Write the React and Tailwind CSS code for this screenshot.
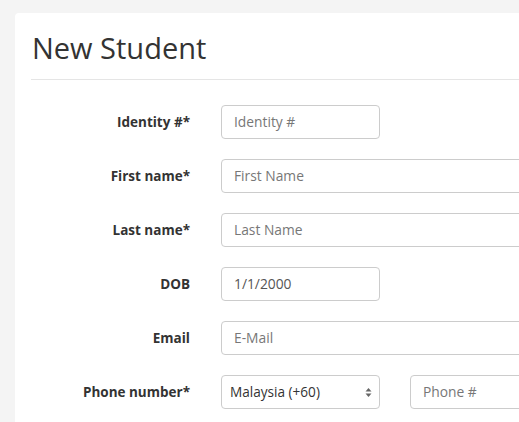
export default function App() {
  const rows = [
    { label: "Identity #*", placeholder: "Identity #", w: "w-[159px]" },
    { label: "First name*", placeholder: "First Name", w: "flex-1" },
    { label: "Last name*", placeholder: "Last Name", w: "flex-1" },
    { label: "DOB", value: "1/1/2000", w: "w-[159px]" },
    { label: "Email", placeholder: "E-Mail", w: "flex-1" },
  ];
  return (
    <div className="min-h-[422px] bg-[#f4f4f4] pt-[13px] pl-[15px] overflow-hidden" style={{ fontFamily: '"Open Sans", sans-serif' }}>
      <div className="bg-white rounded-tl-[4px] w-[700px] min-h-[409px] pl-[16px]">
        <h1 className="text-[29px] leading-[36px] text-[#333] pt-[17px] pb-[13px] pl-[1px]">New Student</h1>
        <div className="h-px bg-[#e5e5e5]" />
        <div className="pt-[25px] flex flex-col gap-[20px]">
          {rows.map((r) => (
            <div key={r.label} className="flex items-center">
              <label className="w-[159px] text-right text-[13.5px] font-bold text-[#333]">{r.label}</label>
              <div className="ml-[31px] flex flex-1">
                <div className={`${r.w} h-[34px] border border-[#ccc] rounded-[4px] px-[12px] flex items-center text-[13.8px] ${r.value ? "text-[#555]" : "text-[#777]"}`}>
                  {r.value || r.placeholder}
                </div>
              </div>
            </div>
          ))}
          <div className="flex items-center">
            <label className="w-[159px] text-right text-[13.5px] font-bold text-[#333]">Phone number*</label>
            <div className="ml-[31px] flex flex-1">
              <div className="w-[159px] h-[34px] border border-[#ccc] rounded-[4px] pl-[8px] pr-[7px] flex items-center justify-between text-[13.6px] text-[#333]">
                <span>Malaysia (+60)</span>
                <svg width="7" height="11" viewBox="0 0 7 11">
                  <path d="M3.5 1 L6.5 4.5 L0.5 4.5 Z" fill="#666" />
                  <path d="M3.5 10 L6.5 6.5 L0.5 6.5 Z" fill="#666" />
                </svg>
              </div>
              <div className="ml-[30px] flex-1 h-[34px] border border-[#ccc] rounded-[4px] px-[12px] flex items-center text-[13.8px] text-[#777]">
                Phone #
              </div>
            </div>
          </div>
        </div>
      </div>
    </div>
  );
}
